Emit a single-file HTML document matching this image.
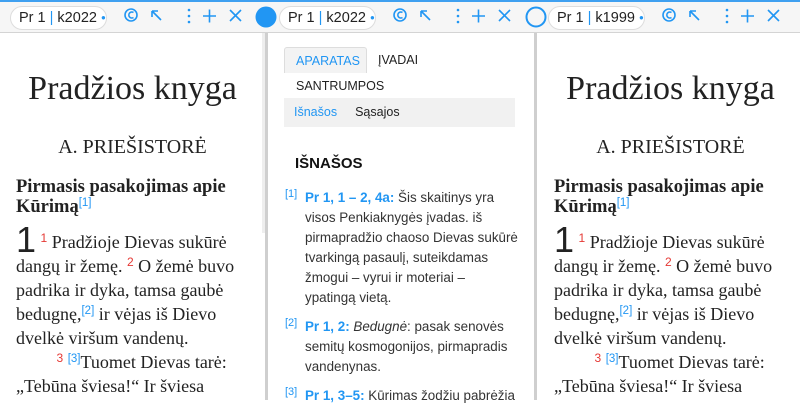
<!DOCTYPE html>
<html><head><meta charset="utf-8"><style>
*{box-sizing:border-box;margin:0;padding:0}
body{width:800px;height:400px;overflow:hidden;background:#fff;position:relative;font-family:"Liberation Sans",sans-serif}
.bar{position:absolute;left:0;top:0;width:800px;height:33px;background:#f6f6f6;border-top:2px solid #3fa0f0;border-bottom:1px solid #d4d4d4}
.pill{position:absolute;top:6px;height:24px;background:#fff;border:1px solid #ddd;border-radius:12px;font-size:14.5px;color:#222;padding:3px 0 0 8px;width:97px;white-space:nowrap;overflow:hidden}
.pill b{font-weight:normal;color:#2196f3}
.pill i{font-style:normal;font-size:8px;color:#2196f3;position:relative;top:-2px}
.ic{position:absolute;top:0}
.div{position:absolute;top:33px;width:3px;height:367px;background:#cfcfcf}
.serif{font-family:"Liberation Serif",serif;color:#222}
.t1{position:absolute;font-size:34px;text-align:center;width:265px}
.t2{position:absolute;font-size:20px;text-align:center;width:265px}
.h{position:absolute;left:16px;font-weight:bold;font-size:18.5px;line-height:20px;width:235px}
.v{position:absolute;left:16px;font-size:18px;line-height:24px;width:228px}
.r{color:#e53935;font-family:"Liberation Sans",sans-serif;font-size:12px;vertical-align:6px;line-height:0}
.b{color:#2196f3;font-family:"Liberation Sans",sans-serif;font-size:11.5px;vertical-align:6px;line-height:0}
.big{font-size:36px;line-height:0;font-family:"Liberation Sans",sans-serif;font-weight:300;vertical-align:-4px}
.mid{position:absolute;left:269px;top:33px;width:265px;height:367px}
.n{position:absolute;left:16px;font-size:13.4px;line-height:20px;color:#333;white-space:nowrap}
.n .k{position:absolute;left:0;top:-4px;color:#2196f3;font-size:11px}
.n .tx{margin-left:20px}
.n .s{color:#2196f3;font-weight:bold}
</style></head><body>
<div class="bar"></div>
<svg class="ic" width="800" height="33" style="left:0">
<g fill="none" stroke="#2196f3" stroke-width="1.6">
<g><circle cx="131" cy="15" r="6"/><path d="M133.5 12.5a3 3 0 1 0 0 5"/><path d="M152 11h6M152 11v6M152 11l9 9"/><path d="M203 16h13M209.5 9.5v13"/><path d="M230 10l11 11M241 10l-11 11"/></g>
<g transform="translate(269 0)"><circle cx="131" cy="15" r="6"/><path d="M133.5 12.5a3 3 0 1 0 0 5"/><path d="M152 11h6M152 11v6M152 11l9 9"/><path d="M203 16h13M209.5 9.5v13"/><path d="M230 10l11 11M241 10l-11 11"/></g>
<g transform="translate(538 0)"><circle cx="131" cy="15" r="6"/><path d="M133.5 12.5a3 3 0 1 0 0 5"/><path d="M152 11h6M152 11v6M152 11l9 9"/><path d="M203 16h13M209.5 9.5v13"/><path d="M230 10l11 11M241 10l-11 11"/></g>
<circle cx="536" cy="17" r="9.5" stroke-width="2"/>
</g>
<g fill="#2196f3"><circle cx="189" cy="10" r="1.3"/><circle cx="189" cy="16" r="1.3"/><circle cx="189" cy="22" r="1.3"/>
<circle cx="458" cy="10" r="1.3"/><circle cx="458" cy="16" r="1.3"/><circle cx="458" cy="22" r="1.3"/>
<circle cx="727" cy="10" r="1.3"/><circle cx="727" cy="16" r="1.3"/><circle cx="727" cy="22" r="1.3"/>
<circle cx="266" cy="17" r="10.5"/></g>
</svg>
<div class="pill" style="left:10px">Pr 1 <b>|</b> k2022 <i>●</i></div>
<div class="pill" style="left:279px">Pr 1 <b>|</b> k2022 <i>●</i></div>
<div class="pill" style="left:548px">Pr 1 <b>|</b> k1999 <i>●</i></div>
<div class="div" style="left:265px"></div>
<div class="div" style="left:534px"></div>
<div style="position:absolute;left:262px;top:33px;width:3px;height:200px;background:#eee"></div>

<div class="serif" style="position:absolute;left:0;top:0;width:265px;height:400px">
<div class="t1" style="top:70px">Pradžios knyga</div>
<div class="t2" style="top:136px">A. PRIEŠISTORĖ</div>
<div class="h" style="top:177px">Pirmasis pasakojimas apie Kūrimą<span class="b" style="font-weight:normal">[1]</span></div>
<div class="v" style="top:230px"><span class="big">1</span> <span class="r">1</span> Pradžioje Dievas sukūrė dangų ir žemę. <span class="r">2</span> O žemė buvo padrika ir dyka, tamsa gaubė bedugnę,<span class="b">[2]</span> ir vėjas iš Dievo dvelkė viršum vandenų.<br>&nbsp;&nbsp;&nbsp;&nbsp;&nbsp;&nbsp;&nbsp;&nbsp;&nbsp;<span class="r">3</span> <span class="b">[3]</span>Tuomet Dievas tarė: „Tebūna šviesa!“ Ir šviesa</div>
</div>
<div class="serif" style="position:absolute;left:538px;top:0;width:265px;height:400px">
<div class="t1" style="top:70px">Pradžios knyga</div>
<div class="t2" style="top:136px">A. PRIEŠISTORĖ</div>
<div class="h" style="top:177px">Pirmasis pasakojimas apie Kūrimą<span class="b" style="font-weight:normal">[1]</span></div>
<div class="v" style="top:230px"><span class="big">1</span> <span class="r">1</span> Pradžioje Dievas sukūrė dangų ir žemę. <span class="r">2</span> O žemė buvo padrika ir dyka, tamsa gaubė bedugnę,<span class="b">[2]</span> ir vėjas iš Dievo dvelkė viršum vandenų.<br>&nbsp;&nbsp;&nbsp;&nbsp;&nbsp;&nbsp;&nbsp;&nbsp;&nbsp;<span class="r">3</span> <span class="b">[3]</span>Tuomet Dievas tarė: „Tebūna šviesa!“ Ir šviesa</div>
</div>

<div class="mid">
<div style="position:absolute;left:15px;top:14px;width:83px;height:26px;background:#f3f3f3;border:1px solid #ddd;border-bottom:none;border-radius:3px 3px 0 0;color:#2196f3;font-size:12.5px;padding:6px 0 0 11px">APARATAS</div>
<div style="position:absolute;left:109px;top:20px;font-size:12.5px;color:#222">ĮVADAI</div>
<div style="position:absolute;left:27px;top:46px;font-size:12.5px;color:#222">SANTRUMPOS</div>
<div style="position:absolute;left:15px;top:65px;width:231px;height:29px;background:#f1f1f1;font-size:12.5px;padding:7px 0 0 10px"><span style="color:#2196f3">Išnašos</span><span style="margin-left:18px;color:#222">Sąsajos</span></div>
<div style="position:absolute;left:26px;top:122px;font-weight:bold;font-size:15px;color:#111">IŠNAŠOS</div>
<div class="n" style="top:155px"><span class="k">[1]</span><div class="tx"><span class="s">Pr 1, 1 – 2, 4a:</span> Šis skaitinys yra<br>visos Penkiaknygės įvadas. iš<br>pirmapradžio chaoso Dievas sukūrė<br>tvarkingą pasaulį, suteikdamas<br>žmogui – vyrui ir moteriai –<br>ypatingą vietą.</div></div>
<div class="n" style="top:284px"><span class="k">[2]</span><div class="tx"><span class="s">Pr 1, 2:</span> <i>Bedugnė</i>: pasak senovės<br>semitų kosmogonijos, pirmapradis<br>vandenynas.</div></div>
<div class="n" style="top:353px"><span class="k">[3]</span><div class="tx"><span class="s">Pr 1, 3–5:</span> Kūrimas žodžiu pabrėžia</div></div>
</div>
</body></html>
